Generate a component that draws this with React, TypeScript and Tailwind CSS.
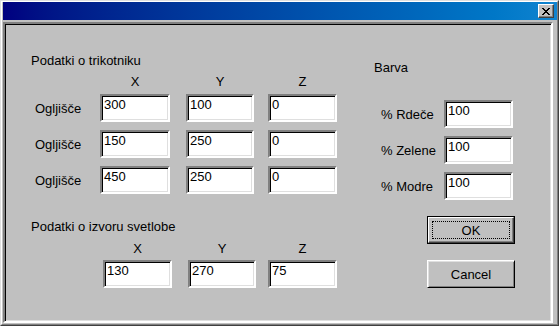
import React from "react";

function Field({ value, w }: { value: string; w: string }) {
  return (
    <div
      className={`${w} h-[28px] bg-white border-2 border-t-[#808080] border-l-[#808080] border-r-white border-b-white shadow-[inset_1px_1px_0_#000,inset_-1px_-1px_0_#dfdfdf] pl-[2px] pt-[1px] leading-[15px]`}
    >
      {value}
    </div>
  );
}

function CloseGlyph() {
  return (
    <svg width="8" height="7" viewBox="0 0 8 7" shapeRendering="crispEdges">
      <path
        d="M0 0h2v1H0zM6 0h2v1H6zM1 1h2v1H1zM5 1h2v1H5zM2 2h4v1H2zM3 3h2v1H3zM2 4h4v1H2zM1 5h2v1H1zM5 5h2v1H5zM0 6h2v1H0zM6 6h2v1H6z"
        fill="#000"
      />
    </svg>
  );
}

const rows = [
  ["300", "100", "0"],
  ["150", "250", "0"],
  ["450", "250", "0"],
];

const colours = [
  ["% Rdeče", "100"],
  ["% Zelene", "100"],
  ["% Modre", "100"],
];

export default function App() {
  return (
    <div className="w-[559px] h-[326px] bg-[#c0c0c0] border border-t-[#dfdfdf] border-l-[#dfdfdf] border-r-[#404040] border-b-[#404040] font-['Liberation_Sans',Arial,sans-serif] text-[13px] leading-[15px] text-black overflow-hidden">
      <div className="h-full flex flex-col border border-t-white border-l-white border-r-[#808080] border-b-[#808080] pl-[1px] pb-[1px]">
        {/* title bar */}
        <div className="h-[18px] shrink-0 flex items-center justify-end pr-[3px] bg-gradient-to-r from-[#000080] to-[#1084d0]">
          <div className="w-[16px] h-[14px] flex items-center justify-center bg-[#c0c0c0] border border-t-white border-l-white border-r-[#404040] border-b-[#404040] shadow-[inset_-1px_-1px_0_#808080]">
            <CloseGlyph />
          </div>
        </div>

        {/* client */}
        <div className="flex-1 mt-[2px] mr-[4px] flex border-2 border-t-[#808080] border-l-[#808080] border-r-white border-b-white shadow-[inset_1px_1px_0_#000,inset_-1px_-1px_0_#dfdfdf]">
          <div className="w-[355px] flex flex-col">
            <div className="pt-[29px] pl-[26px]">Podatki o trikotniku</div>
            <div className="mt-[6px] flex pl-[95px]">
              <div className="w-[70px] text-center">X</div>
              <div className="w-[68px] ml-[16px] text-center">Y</div>
              <div className="w-[69px] ml-[14px] text-center">Z</div>
            </div>
            <div className="mt-[5px] flex flex-col gap-[8px]">
              {rows.map((r, i) => (
                <div key={i} className="flex items-center pl-[30px]">
                  <div className="w-[65px]">Ogljišče</div>
                  <Field value={r[0]} w="w-[70px]" />
                  <div className="ml-[16px]">
                    <Field value={r[1]} w="w-[68px]" />
                  </div>
                  <div className="ml-[14px]">
                    <Field value={r[2]} w="w-[69px]" />
                  </div>
                </div>
              ))}
            </div>

            <div className="mt-[25px] pl-[26px]">Podatki o izvoru svetlobe</div>
            <div className="mt-[7px] flex pl-[98px]">
              <div className="w-[69px] text-center">X</div>
              <div className="w-[68px] ml-[16px] text-center">Y</div>
              <div className="w-[69px] ml-[12px] text-center">Z</div>
            </div>
            <div className="mt-[4px] flex pl-[98px]">
              <Field value="130" w="w-[69px]" />
              <div className="ml-[16px]">
                <Field value="270" w="w-[68px]" />
              </div>
              <div className="ml-[12px]">
                <Field value="75" w="w-[69px]" />
              </div>
            </div>
          </div>

          <div className="flex flex-col">
            <div className="pt-[36px] pl-[14px]">Barva</div>
            <div className="mt-[25px] flex flex-col gap-[8px]">
              {colours.map(([label, v]) => (
                <div key={label} className="flex items-center pl-[21px]">
                  <div className="w-[63px]">{label}</div>
                  <Field value={v} w="w-[69px]" />
                </div>
              ))}
            </div>

            <div className="mt-[16px] ml-[67px] w-[88px] h-[28px] border border-black">
              <div className="h-full p-[3px] border border-t-white border-l-white border-r-[#404040] border-b-[#404040] shadow-[inset_-1px_-1px_0_#808080]">
                <div className="h-full flex items-center justify-center border border-dotted border-black">
                  OK
                </div>
              </div>
            </div>

            <div className="mt-[16px] ml-[67px] w-[88px] h-[28px] flex items-center justify-center border border-t-white border-l-white border-r-black border-b-black shadow-[inset_1px_1px_0_#dfdfdf,inset_-1px_-1px_0_#808080]">
              Cancel
            </div>
          </div>
        </div>
      </div>
    </div>
  );
}
